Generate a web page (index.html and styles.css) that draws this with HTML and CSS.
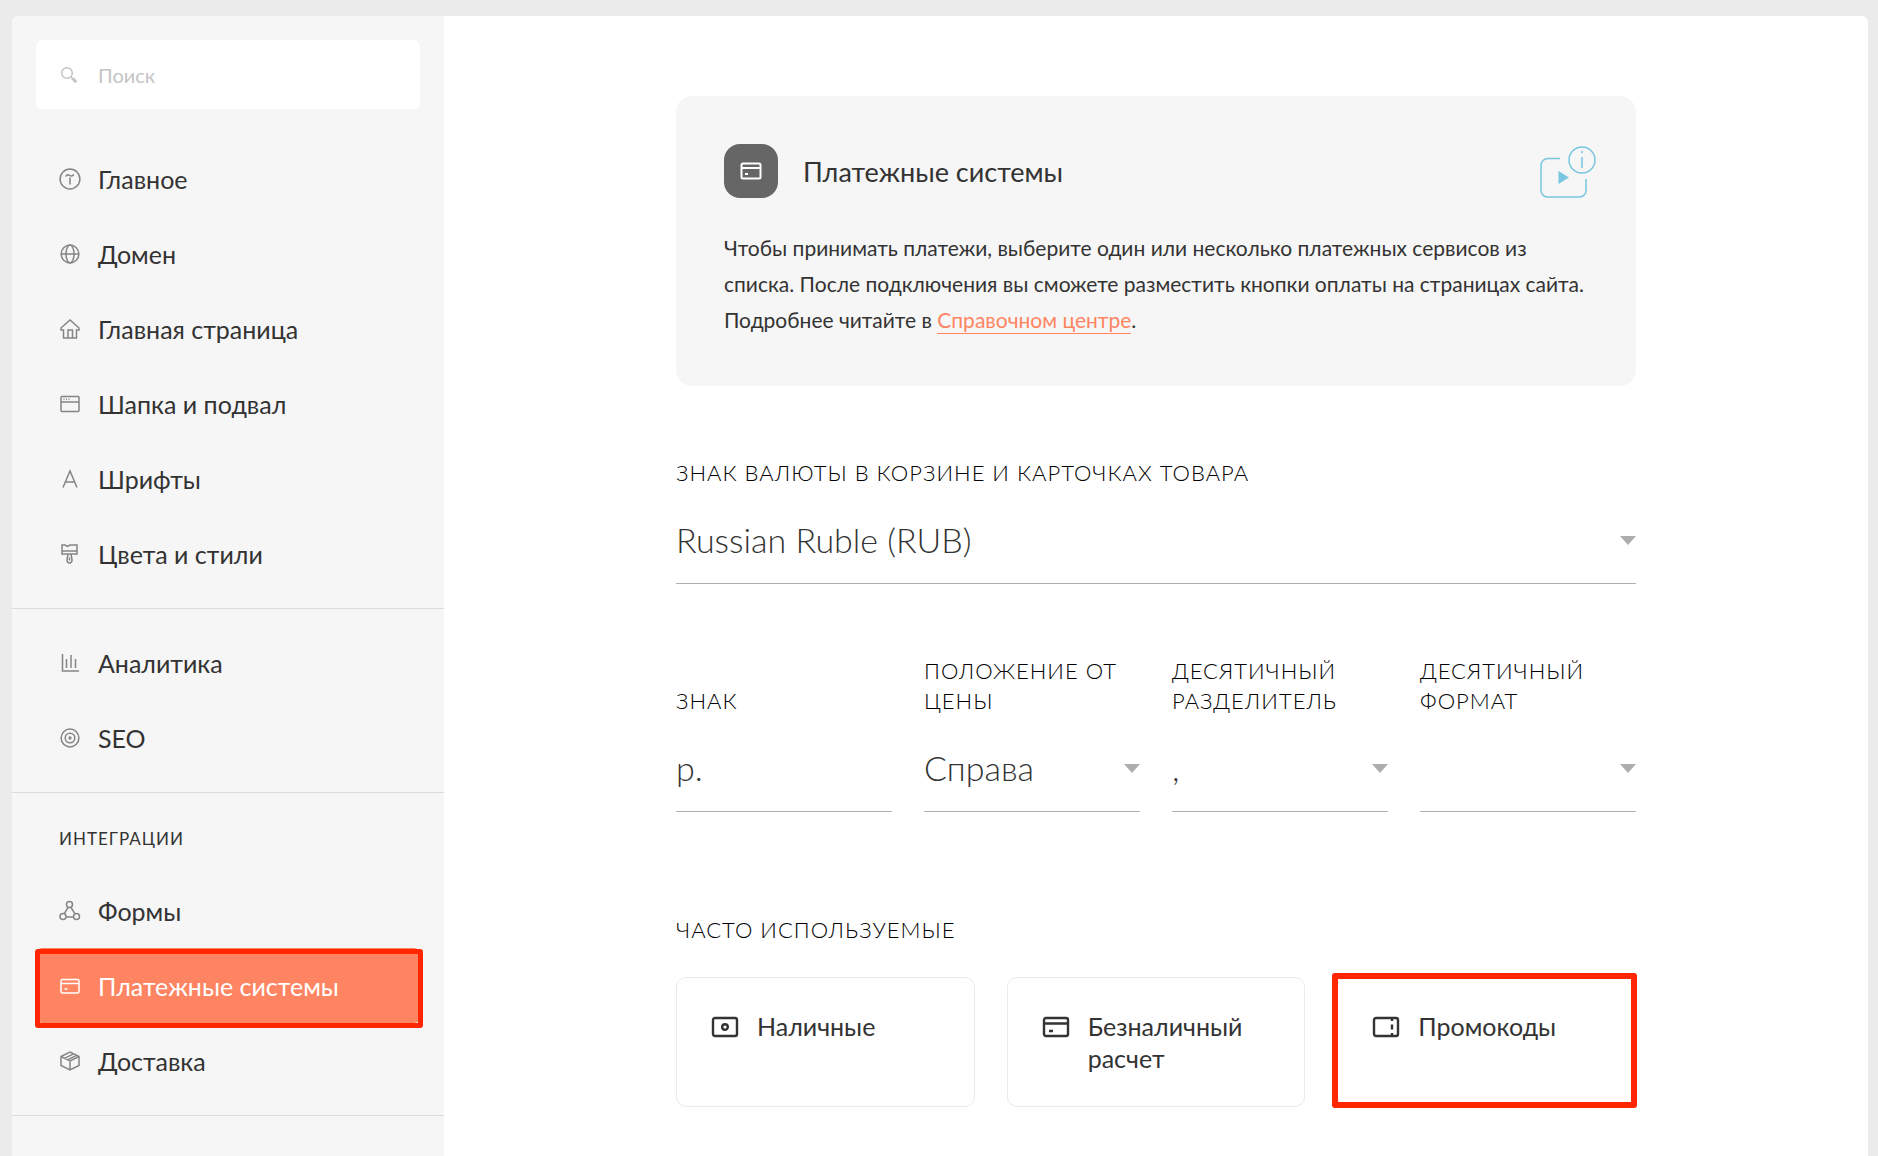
FILE: index.html
```html
<!DOCTYPE html>
<html lang="ru">
<head>
    <meta charset="UTF-8">
    <meta name="viewport" content="width=device-width, initial-scale=1.0">
    <title>Платежные системы</title>
    <link rel="stylesheet" href="styles.css">
</head>
<body>

<div class="panel">
    <aside class="sidebar">
        <div class="search">
            <svg class="search-icon" viewBox="0 0 18 18">
                <circle cx="7" cy="7" r="5.3"/>
                <path d="M11 11l1.5 1.5"/>
                <path class="handle" d="M12.3 12.3l4 4"/>
            </svg>
            <input type="search" placeholder="Поиск" aria-label="Поиск">
        </div>

        <nav>
            <ul class="menu">
                <li><a href="#">
                    <svg viewBox="0 0 22 22"><circle cx="11" cy="11" r="9.9"/><path d="M6.8 8.6c.6-1.8 2-2.2 3.6-1.3 1.8 1 3.4.8 4.4-.8M11 9.5v7"/></svg>
                    Главное
                </a></li>
                <li><a href="#">
                    <svg viewBox="0 0 22 22"><circle cx="11" cy="11" r="8.9"/><ellipse cx="11" cy="11" rx="4" ry="8.9"/><path d="M2 11h18"/></svg>
                    Домен
                </a></li>
                <li><a href="#">
                    <svg viewBox="0 0 22 22"><path d="M4.5 12H2v-2l9-8 9 8v2h-2.500v8h-13zM9 20v-8h4.500v8"/></svg>
                    Главная страница
                </a></li>
                <li><a href="#">
                    <svg viewBox="0 0 22 22"><rect x="2" y="3.5" width="18" height="15" rx="1"/><path d="M2 9h18"/><path d="M4.5 6.3h1M7 6.3h1M9.5 6.3h1"/></svg>
                    Шапка и подвал
                </a></li>
                <li><a href="#">
                    <svg viewBox="0 0 22 22"><path d="M4 19.5L11 3l7 16.5M6.500 14h9"/></svg>
                    Шрифты
                </a></li>
                <li><a href="#">
                    <svg viewBox="0 0 22 22"><path d="M3 2h3l2.500 1.500L11 2h7v9H3zM3 8h15M9 11.500l-1 5c-.3 2 1 3.500 2.500 3.500s2.800-1.500 2.500-3.500l-1-5M10.500 14.500v3"/></svg>
                    Цвета и стили
                </a></li>
            </ul>

            <ul class="menu">
                <li><a href="#">
                    <svg viewBox="0 0 22 22"><path d="M3.5 2v17H20M7.5 7v9M12 3v13M16.5 7v9"/></svg>
                    Аналитика
                </a></li>
                <li><a href="#">
                    <svg viewBox="0 0 22 22"><circle cx="11" cy="11" r="8.9"/><circle cx="11" cy="11" r="4.8"/><circle cx="11" cy="11" r=".9"/></svg>
                    SEO
                </a></li>
            </ul>

            <div class="menu-section">
                <h2>Интеграции</h2>
                <ul class="menu">
                    <li><a href="#">
                        <svg viewBox="0 0 22 22"><circle cx="10.5" cy="4.5" r="3"/><circle cx="4" cy="16.5" r="3"/><circle cx="17.5" cy="16.5" r="3"/><path d="M9 7.5l-3.800 6.300M12 7.500l4 6.300M7 17h7.500"/></svg>
                        Формы
                    </a></li>
                    <li><a class="active" href="#">
                        <svg viewBox="0 0 22 22"><rect x="2" y="4.5" width="18" height="13.5" rx="1.5"/><path d="M2 8.5h18M5.5 14h3"/></svg>
                        Платежные системы
                    </a></li>
                    <li><a href="#">
                        <svg viewBox="0 0 22 22"><path d="M2 6.5L11 2l9 4.500v9L11 20l-9-4.500zM2 6.500l9 4.500 9-4.500M11 11v9M5.500 8.300l9-4.500M8.500 9.800l9-4.500"/></svg>
                        Доставка
                    </a></li>
                </ul>
            </div>
        </nav>
    </aside>

    <main>
        <div class="content">
            <section class="intro">
                <header>
                    <div class="intro-icon">
                        <svg viewBox="0 0 22 22"><rect x="1.5" y="3.5" width="19" height="15" rx="1.5"/><path d="M1.5 8h19M5 14h3"/></svg>
                    </div>
                    <h1>Платежные системы</h1>
                    <a class="video" href="#" aria-label="Видео">
                        <svg viewBox="0 0 58 54">
                            <path d="M21 14.500H9a7 7 0 0 0-7 7v25a6.500 6.500 0 0 0 6.500 6.500h32a6.500 6.500 0 0 0 6.500-6.500V35"/>
                            <circle cx="43" cy="16" r="13"/>
                            <path d="M43 13v11M43 7v2.200"/>
                            <path class="play" d="M19.500 27v13l10.500-6.500z"/>
                        </svg>
                    </a>
                </header>
                <p>Чтобы принимать платежи, выберите один или несколько платежных сервисов из списка. После подключения вы сможете разместить кнопки оплаты на страницах сайта. Подробнее читайте в <a href="#">Справочном центре</a>.</p>
            </section>

            <form>
                <div class="field">
                    <label for="currency">Знак валюты в корзине и карточках товара</label>
                    <div class="select">
                        <select id="currency"><option>Russian Ruble (RUB)</option></select>
                    </div>
                </div>

                <div class="fields">
                    <div class="field">
                        <label for="sign">Знак</label>
                        <input type="text" id="sign" value="р.">
                    </div>
                    <div class="field">
                        <label for="position">Положение от цены</label>
                        <div class="select">
                            <select id="position"><option>Справа</option></select>
                        </div>
                    </div>
                    <div class="field">
                        <label for="separator">Десятичный разделитель</label>
                        <div class="select">
                            <select id="separator"><option>,</option></select>
                        </div>
                    </div>
                    <div class="field">
                        <label for="format">Десятичный формат</label>
                        <div class="select">
                            <select id="format"><option></option></select>
                        </div>
                    </div>
                </div>
            </form>

            <h2 class="title">Часто используемые</h2>
            <div class="cards">
                <a class="card" href="#">
                    <svg viewBox="0 0 28 22"><rect x="2" y="2" width="24" height="18" rx="2"/><circle cx="14" cy="11" r="2.8"/></svg>
                    <span>Наличные</span>
                </a>
                <a class="card" href="#">
                    <svg viewBox="0 0 28 22"><rect x="2" y="2" width="24" height="18" rx="2"/><path d="M2 7.5h24M7 15h4"/></svg>
                    <span>Безналичный расчет</span>
                </a>
                <a class="card marked" href="#">
                    <svg viewBox="0 0 28 22"><rect x="2" y="2" width="24" height="18" rx="2"/><path d="M20 2v3M20 8.5v5M20 17v3"/></svg>
                    <span>Промокоды</span>
                </a>
            </div>
        </div>
    </main>
</div>

</body>
</html>
```
FILE: styles.css
```css
* {
    box-sizing: border-box;
}
body {
    font-family: Lato, "Open Sans", sans-serif;
    background-color: #ebebeb;
    color: #333;
    margin: 0;
    padding: 16px 10px 0 12px;
}
h1, h2, p {
    margin: 0;
    font-weight: 400;
}
a {
    color: inherit;
    text-decoration: none;
}
svg {
    display: block;
    flex-shrink: 0;
    fill: none;
    stroke: currentColor;
}
.panel {
    display: flex;
    min-height: calc(100vh - 16px);
    background-color: #fff;
    border-radius: 6px 6px 0 0;
    overflow: hidden;
}

/* sidebar */
.sidebar {
    width: 432px;
    flex-shrink: 0;
    background-color: #f6f6f6;
    padding-top: 24px;
}
.search {
    display: flex;
    align-items: center;
    gap: 20px;
    height: 69px;
    margin: 0 24px 16px;
    padding: 0 24px;
    background-color: #fff;
    border-radius: 6px;
}
.search-icon {
    width: 18px;
    height: 18px;
    color: #c4c4c4;
    stroke-width: 1.5;
}
.search-icon .handle {
    stroke-width: 3;
}
.search input {
    flex: 1;
    min-width: 0;
    border: none;
    outline: none;
    padding: 0;
    background: none;
    font: inherit;
    font-size: 20px;
}
.search input::placeholder {
    color: #c4c4c4;
}
.menu {
    list-style: none;
    margin: 0;
    padding: 16px 24px 17px;
}
nav > .menu,
.menu-section {
    border-bottom: 1px solid #dcdcdc;
}
.menu a {
    position: relative;
    display: flex;
    align-items: center;
    gap: 17px;
    height: 75px;
    padding-left: 23px;
    font-size: 25px;
}
.menu svg {
    width: 22px;
    height: 22px;
    color: #858585;
    stroke-width: 1.5;
}
.menu a.active {
    background-color: #ff8562;
    border-radius: 6px;
    color: #fff;
}
.menu a.active svg {
    color: #fff;
}
.menu a.active::after {
    content: "";
    position: absolute;
    inset: 1px -3px -5px -1px;
    border: 5px solid #ff2600;
    border-radius: 3px;
}
.menu-section {
    padding-top: 30px;
}
.menu-section h2 {
    margin-bottom: 2px;
    padding: 0 47px;
    font-size: 17px;
    line-height: 32px;
    letter-spacing: 1px;
    text-transform: uppercase;
}

/* content */
main {
    flex: 1;
    min-width: 0;
    padding: 80px 32px 48px;
}
.content {
    max-width: 960px;
    margin: 0 auto;
}
.intro {
    padding: 48px;
    background-color: #f6f6f6;
    border-radius: 16px;
}
.intro header {
    display: flex;
    align-items: center;
    margin-bottom: 32px;
}
.intro-icon {
    display: flex;
    align-items: center;
    justify-content: center;
    width: 54px;
    height: 54px;
    border-radius: 16px;
    background-color: #666;
    color: #fff;
}
.intro-icon svg {
    width: 22px;
    height: 22px;
    stroke-width: 2;
}
.intro h1 {
    flex: 1;
    margin-left: 25px;
    font-size: 27px;
}
.video {
    margin-right: -9px;
    color: #78c6e0;
}
.video svg {
    width: 58px;
    height: 54px;
    stroke-width: 1.5;
}
.video .play {
    fill: currentColor;
    stroke: none;
}
.intro p {
    font-size: 21px;
    line-height: 36px;
}
.intro p a {
    padding-bottom: 1px;
    color: #ff8562;
    border-bottom: 1px solid #ff8562;
}
.field label,
.title {
    display: block;
    font-size: 22px;
    font-weight: 300;
    line-height: 30px;
    letter-spacing: 1px;
    text-transform: uppercase;
    color: #000;
}
.field {
    margin-top: 72px;
}
.fields {
    display: grid;
    grid-template-columns: repeat(4, 1fr);
    align-items: end;
    gap: 32px;
}
.select {
    position: relative;
}
.select::after {
    content: "";
    position: absolute;
    top: 24px;
    right: 0;
    border: 8px solid transparent;
    border-top: 9px solid #adadad;
    border-bottom: none;
    pointer-events: none;
}
.field input,
.field select {
    appearance: none;
    display: block;
    width: 100%;
    height: 72px;
    margin-top: 24px;
    padding: 0 0 17px;
    border: none;
    border-bottom: 1px solid #adadad;
    border-radius: 0;
    outline: none;
    background: none;
    color: #333;
    font: inherit;
    font-size: 34px;
    font-weight: 300;
}
.title {
    margin: 103px 0 32px;
}
.cards {
    display: grid;
    grid-template-columns: repeat(3, 1fr);
    gap: 32px;
}
.card {
    position: relative;
    display: flex;
    gap: 18px;
    min-height: 130px;
    padding: 32px 34px;
    border: 1px solid #ebebeb;
    border-radius: 10px;
    font-size: 25px;
    line-height: 32px;
}
.card svg {
    width: 28px;
    height: 22px;
    margin-top: 6px;
    stroke-width: 2.4;
}
.card.marked::after {
    content: "";
    position: absolute;
    inset: -5px -2px -2px -6px;
    border: 6px solid #ff2600;
    border-radius: 3px;
}
```
